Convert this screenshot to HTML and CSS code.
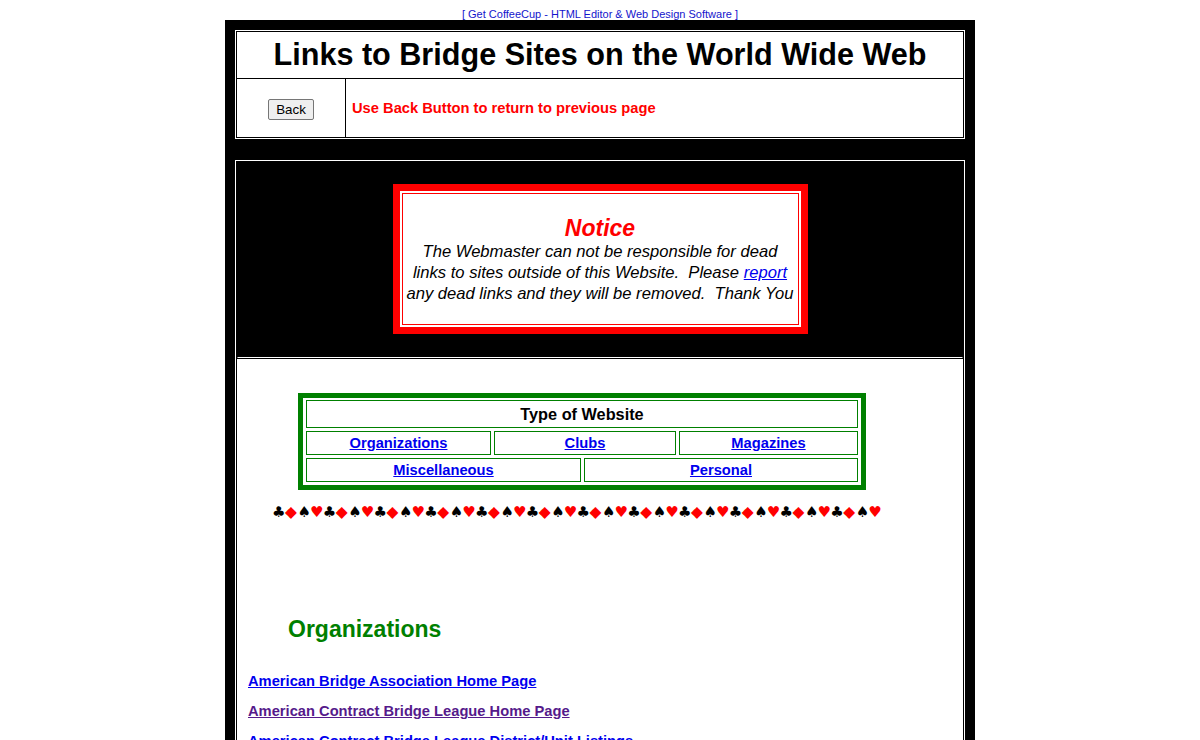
FILE: index.html
```html
<!DOCTYPE html>
<html>
<head>
<meta charset="utf-8">
<title>Links to Bridge Sites on the World Wide Web</title>
<link rel="stylesheet" href="styles.css">
</head>
<body>
<div class="ad"><a href="#">[ Get CoffeeCup - HTML Editor &amp; Web Design Software ]</a></div>
<div class="page">
  <table class="frame head">
    <tr><td class="title" colspan="2">Links to Bridge Sites on the World Wide Web</td></tr>
    <tr>
      <td class="backcell"><button class="back" type="button">Back</button></td>
      <td class="backnote">Use Back Button to return to previous page</td>
    </tr>
  </table>
  <table class="frame main">
    <tr>
      <td class="noticecell">
        <div class="notice">
          <div class="notice-in">
            <div class="notice-title">Notice</div>
            <div class="notice-text">The Webmaster can not be responsible for dead<br>links to sites outside of this Website.&nbsp; Please <a href="#">report</a><br>any dead links and they will be removed.&nbsp; Thank You</div>
          </div>
        </div>
      </td>
    </tr>
    <tr>
      <td class="content">
        <div class="types">
          <div class="trow trow-head"><div class="tcell">Type of Website</div></div>
          <div class="trow trow-three">
            <div class="tcell"><a href="#org">Organizations</a></div>
            <div class="tcell"><a href="#">Clubs</a></div>
            <div class="tcell"><a href="#">Magazines</a></div>
          </div>
          <div class="trow trow-two">
            <div class="tcell"><a href="#">Miscellaneous</a></div>
            <div class="tcell"><a href="#">Personal</a></div>
          </div>
        </div>
        <div class="suits"><span class="b">♣</span><span class="r d">◆</span><span class="b">♠</span><span class="r">♥</span><span class="b">♣</span><span class="r d">◆</span><span class="b">♠</span><span class="r">♥</span><span class="b">♣</span><span class="r d">◆</span><span class="b">♠</span><span class="r">♥</span><span class="b">♣</span><span class="r d">◆</span><span class="b">♠</span><span class="r">♥</span><span class="b">♣</span><span class="r d">◆</span><span class="b">♠</span><span class="r">♥</span><span class="b">♣</span><span class="r d">◆</span><span class="b">♠</span><span class="r">♥</span><span class="b">♣</span><span class="r d">◆</span><span class="b">♠</span><span class="r">♥</span><span class="b">♣</span><span class="r d">◆</span><span class="b">♠</span><span class="r">♥</span><span class="b">♣</span><span class="r d">◆</span><span class="b">♠</span><span class="r">♥</span><span class="b">♣</span><span class="r d">◆</span><span class="b">♠</span><span class="r">♥</span><span class="b">♣</span><span class="r d">◆</span><span class="b">♠</span><span class="r">♥</span><span class="b">♣</span><span class="r d">◆</span><span class="b">♠</span><span class="r">♥</span></div>
        <h2 class="section" id="org">Organizations</h2>
        <div class="links">
          <a href="#">American Bridge Association Home Page</a>
          <a href="#" class="visited">American Contract Bridge League Home Page</a>
          <a href="#">American Contract Bridge League District/Unit Listings</a>
        </div>
      </td>
    </tr>
  </table>
</div>
</body>
</html>
```

FILE: styles.css
```css
body {
  margin: 8px;
  font-family: "Liberation Sans", Arial, sans-serif;
  background: #ffffff;
  color: #000;
}

a { color: #0000ee; }
a.visited { color: #551a8b; }

.ad {
  text-align: center;
  font-size: 11px;
  line-height: 12px;
}
.ad a { text-decoration: none; color: #1414cc; }

.page {
  width: 750px;
  margin: 0 auto;
  box-sizing: border-box;
  background: #000;
  padding: 10px 11px 10px 10px;
}

.frame {
  width: 730px;
  border: 1px solid #fff;
  border-collapse: separate;
  border-spacing: 1px;
  background: #000;
}
.frame td {
  border: 1px solid #fff;
  background: #fff;
  padding: 0;
}

.head { margin-bottom: 21px; }

.title {
  text-align: center;
  font-size: 30.6px;
  font-weight: bold;
  line-height: 43px;
  height: 44px;
  vertical-align: top;
}

.backcell {
  width: 106px;
  height: 56px;
  text-align: center;
  vertical-align: middle;
}
.back {
  font-family: "Liberation Sans", Arial, sans-serif;
  font-size: 13.33px;
  line-height: 15px;
  padding: 2px 7px;
  border: 1px solid #767676;
  border-radius: 2px;
  background: #efefef;
  color: #000;
  margin-top: 2px;
}
.backnote {
  padding-left: 5px !important;
  color: #ff0000;
  font-weight: bold;
  font-size: 14.7px;
  vertical-align: middle;
}

.frame td.noticecell {
  background: #000;
  border-color: #000 #000 #fff #000;
  padding: 21px 0 23px;
}
.notice {
  width: 415px;
  height: 150px;
  box-sizing: border-box;
  margin: 0 auto;
  border: 7px solid #ff0000;
  padding: 2px;
  background: #fff;
}
.notice-in {
  height: 100%;
  box-sizing: border-box;
  border: 1px solid #ff0000;
  display: flex;
  flex-direction: column;
  justify-content: center;
  align-items: center;
  text-align: center;
  font-style: italic;
}
.notice-title {
  color: #ff0000;
  font-weight: bold;
  font-size: 23px;
  line-height: 26px;
}
.notice-text {
  font-size: 16.6px;
  line-height: 21px;
}
.notice-text a { color: #0000ee; }

.frame td.content {
  padding: 0 10px 20px;
  vertical-align: top;
}

.types {
  margin: 33px 0 0 50px;
  width: 568px;
  box-sizing: border-box;
  border: 5px solid #008000;
  padding: 2px 3px 3px;
  display: flex;
  flex-direction: column;
  gap: 3px;
  background: #fff;
}
.trow {
  display: grid;
  gap: 3px;
}
.trow-three { grid-template-columns: 185px 182px 179px; }
.trow-two { grid-template-columns: 275px 274px; }
.tcell {
  border: 1px solid #008000;
  text-align: center;
  font-weight: bold;
  font-size: 14.7px;
  line-height: 22px;
}
.trow-head .tcell {
  font-size: 16.3px;
  line-height: 26px;
}

.suits {
  margin: 16px 0 0 24px;
  display: flex;
  align-items: center;
  font-family: "DejaVu Sans", sans-serif;
  font-size: 15px;
  line-height: 13px;
  height: 13px;
}
.suits span {
  width: 12.7px;
  text-align: center;
}
.suits .b { color: #000; }
.suits .r { color: #ff0000; }
.suits .d { font-size: 15.5px; }

.section {
  margin: 97px 0 0 40px;
  color: #008000;
  font-size: 23px;
  line-height: 26px;
  font-weight: bold;
}

.links {
  margin-top: 30px;
  display: flex;
  flex-direction: column;
  align-items: flex-start;
  gap: 12px;
}
.links a {
  font-weight: bold;
  font-size: 14.7px;
  line-height: 18px;
}
```
